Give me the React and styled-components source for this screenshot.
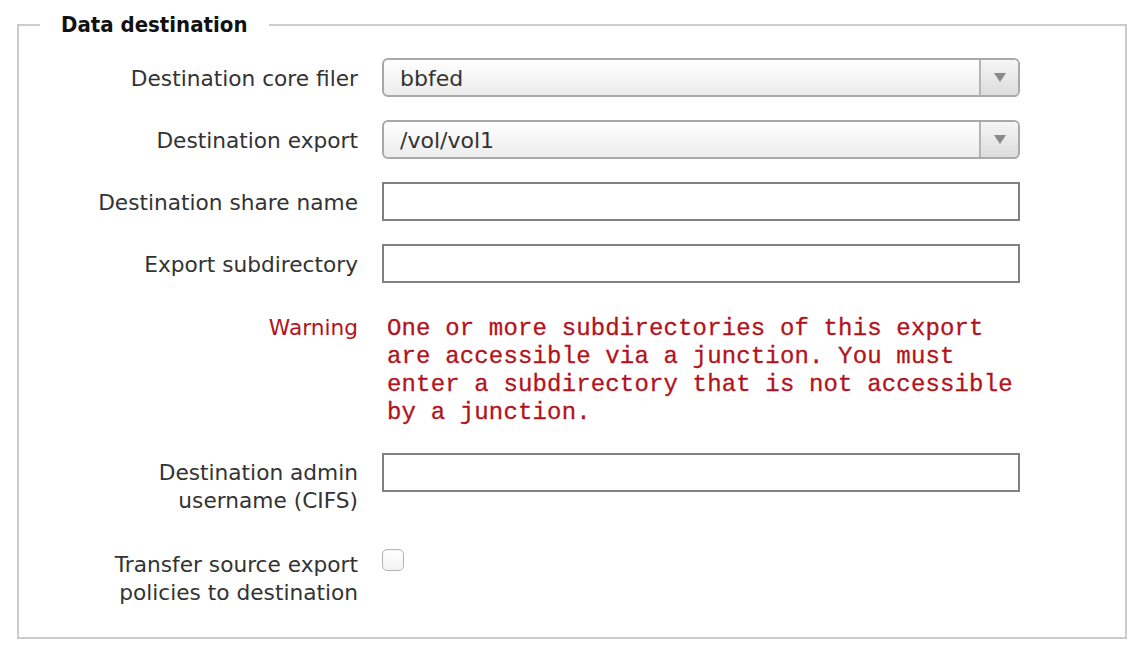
import React from "react";
import styled, { createGlobalStyle } from "styled-components";

const GlobalStyle = createGlobalStyle`
  body {
    margin: 0;
    background: #ffffff;
    font-family: "DejaVu Sans", sans-serif;
  }
`;

const Page = styled.div`
  padding: 11px 15px 0 17px;
  width: 1110px;
`;

const FieldSet = styled.fieldset`
  margin: 0;
  padding: 19px 0 30px 0;
  border: 2px solid #cccccc;
  min-width: 0;
`;

const Legend = styled.legend`
  margin-left: 21px;
  padding: 0 21px;
  font-family: "DejaVu Sans Condensed", "DejaVu Sans", sans-serif;
  font-size: 22px;
  line-height: 28px;
  font-weight: bold;
  color: #111111;
`;

const Form = styled.div`
  display: grid;
  grid-template-columns: 339px 638px;
  column-gap: 24px;
  align-items: start;
`;

const Label = styled.div`
  text-align: right;
  font-size: 21.7px;
  line-height: 28px;
  color: ${(p) => (p.$warning ? "#b3131c" : "#333333")};
  padding-top: ${(p) => p.$top ?? 7}px;
  margin-bottom: ${(p) => p.$gap ?? 23}px;
`;

const Cell = styled.div`
  padding-top: ${(p) => p.$top || 0}px;
  margin-bottom: ${(p) => p.$gap ?? 23}px;
`;

const SelectBox = styled.div`
  display: flex;
  height: 39px;
  box-sizing: border-box;
  border: 2px solid #a9a9a9;
  border-radius: 6px;
  background: linear-gradient(#ffffff, #ececec);
  overflow: hidden;
`;

const SelectValue = styled.div`
  flex: 1;
  padding-left: 16px;
  font-size: 22px;
  line-height: 37px;
  color: #333333;
`;

const SelectArrow = styled.div`
  width: 37px;
  border-left: 2px solid #b5b5b5;
  background: linear-gradient(#f6f6f6, #dcdcdc);
  display: flex;
  align-items: center;
  justify-content: center;
`;

const TextInput = styled.input`
  display: block;
  width: 100%;
  height: 39px;
  box-sizing: border-box;
  border: 2px solid #808080;
  border-radius: 0;
  background: #ffffff;
  font-size: 20px;
  padding: 0 8px;
  outline: none;
`;

const WarningText = styled.div`
  font-family: "Liberation Mono", "Courier New", monospace;
  font-size: 24px;
  line-height: 28px;
  letter-spacing: 0.15px;
  color: #b3131c;
  padding: 9px 0 0 5px;
  -webkit-text-stroke: 0.3px #b3131c;
`;

const Check = styled.span`
  display: block;
  width: 22px;
  height: 22px;
  box-sizing: border-box;
  border: 1px solid #b3b3b3;
  border-radius: 5px;
  background: linear-gradient(#ffffff, #f3f3f3);
  box-shadow: inset 0 1px 1px rgba(0, 0, 0, 0.05);
`;

const Arrow = () => (
  <svg width="12" height="9" viewBox="0 0 12 9">
    <path d="M0 0 L12 0 L6 9 Z" fill="#8a8a8a" />
  </svg>
);

const Select = ({ value }) => (
  <SelectBox>
    <SelectValue>{value}</SelectValue>
    <SelectArrow>
      <Arrow />
    </SelectArrow>
  </SelectBox>
);

export default function App() {
  return (
    <Page>
      <GlobalStyle />
      <FieldSet>
        <Legend>Data destination</Legend>
        <Form>
          <Label>Destination core filer</Label>
          <Cell>
            <Select value="bbfed" />
          </Cell>

          <Label>Destination export</Label>
          <Cell>
            <Select value="/vol/vol1" />
          </Cell>

          <Label>Destination share name</Label>
          <Cell>
            <TextInput type="text" />
          </Cell>

          <Label>Export subdirectory</Label>
          <Cell>
            <TextInput type="text" />
          </Cell>

          <Label $warning $top={8}>Warning</Label>
          <Cell $gap={26}>
            <WarningText>
              One or more subdirectories of this export
              <br />
              are accessible via a junction. You must
              <br />
              enter a subdirectory that is not accessible
              <br />
              by a junction.
            </WarningText>
          </Cell>

          <Label $top={6}>
            Destination admin
            <br />
            username (CIFS)
          </Label>
          <Cell>
            <TextInput type="text" />
          </Cell>

          <Label $top={13} $gap={0}>
            Transfer source export
            <br />
            policies to destination
          </Label>
          <Cell $top={11} $gap={0}>
            <Check />
          </Cell>
        </Form>
      </FieldSet>
    </Page>
  );
}
